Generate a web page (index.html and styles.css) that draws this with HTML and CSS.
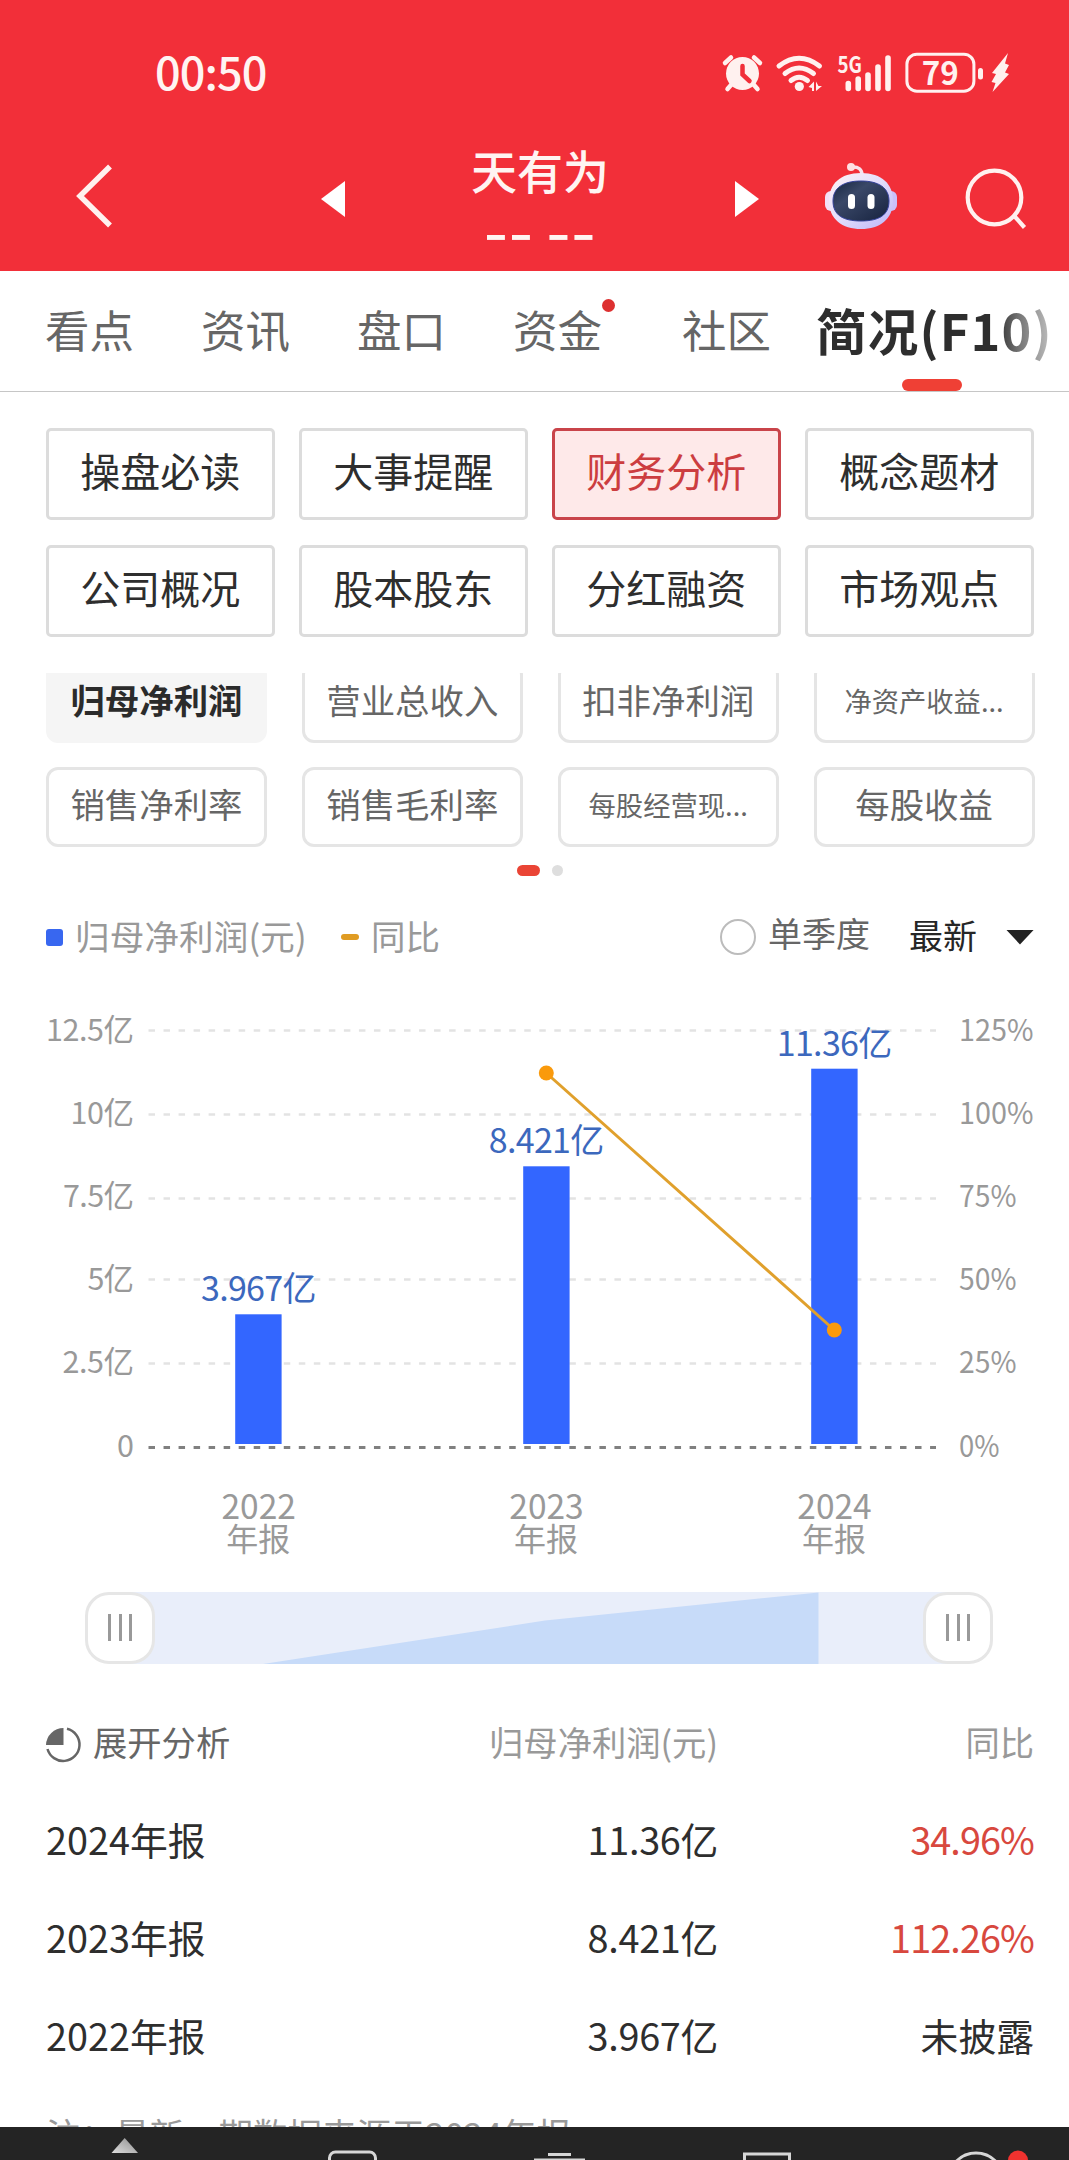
FILE: index.html
```html
<!DOCTYPE html>
<html lang="zh-CN">
<head>
<meta charset="utf-8">
<title>天有为 - 简况(F10)</title>
<link rel="stylesheet" href="styles.css">
</head>
<body>
<div class="screen">
  <header class="top">
    <div class="status">
      <span class="clock">00:50</span>
      <svg class="status-icons" width="290" height="44" viewBox="721 50 290 44" fill="#fff1ef">
        <circle cx="742.500" cy="73.500" r="16.500"/>
        <g fill="none" stroke="#fff1ef" stroke-linecap="round">
          <path d="M725 63l6-5.500M760 63l-6-5.500M731 85l-3.500 4M754 85l3.500 4" stroke-width="4.500"/>
          <path d="M742.500 66v8.500l7 6.500" stroke="#f12f39" stroke-width="4.500"/>
          <path d="M779 66Q799 50.500 819.500 66M785 73.500Q799 62.500 813.500 73.500M791 80.500Q799 74 807.500 80.500" stroke-width="5"/>
          <path d="M848.300 83.500v5M858.200 79v9.500M868 75v13.500M878 67v21.500M888 58v30.500" stroke-width="5.600"/>
          <rect x="906.900" y="54.200" width="67" height="37" rx="10" stroke-width="3"/>
          <path d="M980.500 70.500v6.500" stroke-width="5"/>
        </g>
        <circle cx="799.300" cy="86.500" r="4.600"/>
        <path d="M814 81.500v9.500h-2v-3l-3.500-1zM816 81.500v9.500l6-5h-3.500z"/>
        <path d="M1008 53l-16 20 4 1-4.500 8 4 1-3 9 16.500-18-4-1.500 4-7.500-4-1.500z"/>
        <text class="net" x="837.500" y="73" textLength="24.500" lengthAdjust="spacingAndGlyphs">5G</text>
        <text class="batt" x="940.300" y="85" text-anchor="middle" textLength="37" lengthAdjust="spacingAndGlyphs">79</text>
      </svg>
    </div>
    <nav class="bar">
      <svg class="back" width="40" height="68" viewBox="0 0 40 68"><path d="M35 4.500L5 34l30 29.500" fill="none" stroke="#fff1ef" stroke-width="5.500"/></svg>
      <svg class="prev" width="24" height="36" viewBox="0 0 24 36"><path d="M24 0v36L0 18z" fill="#fff"/></svg>
      <div class="stock">
        <h1>天有为</h1>
        <div class="quote">-- --</div>
      </div>
      <svg class="next" width="24" height="36" viewBox="0 0 24 36"><path d="M0 0v36l24-18z" fill="#fff"/></svg>
      <svg class="robot" width="74" height="68" viewBox="824 162 74 68">
        <defs>
          <linearGradient id="shell" x1="0" y1="0" x2="1" y2="1"><stop offset="0" stop-color="#fff3f5"/><stop offset=".5" stop-color="#e2ddfc"/><stop offset="1" stop-color="#bbb4f7"/></linearGradient>
          <linearGradient id="visor" x1="0" y1="0" x2="1" y2="1"><stop offset="0" stop-color="#172640"/><stop offset=".35" stop-color="#3a4868"/><stop offset="1" stop-color="#16223e"/></linearGradient>
        </defs>
        <path d="M862 175q0-8.500-10-8" fill="none" stroke="#f8e2ec" stroke-width="3.500"/>
        <circle cx="851" cy="167" r="4" fill="#ffdfe2"/>
        <rect x="825" y="191" width="12" height="20" rx="6" fill="#f3dff7"/>
        <rect x="885" y="191" width="12" height="20" rx="6" fill="#cbc0fa"/>
        <path d="M861 173c21 0 32 11 32 28 0 18-13 28-32 28s-32-10-32-28c0-17 11-28 32-28z" fill="url(#shell)"/>
        <path d="M861 181c18 0 28 7 28 20 0 14-10 20-28 20s-28-6-28-20c0-13 10-20 28-20z" fill="url(#visor)" stroke="#34429b" stroke-width="1"/>
        <rect x="848" y="194" width="7" height="15" rx="3.500" fill="#fff"/>
        <rect x="867.500" y="194" width="7" height="15" rx="3.500" fill="#fff"/>
      </svg>
      <svg class="search" width="62" height="62" viewBox="965 168 62 62" fill="none" stroke="#fff1ef" stroke-width="4.200"><circle cx="994.500" cy="197.500" r="26.800"/><path d="M1013 214.500l11.500 13"/></svg>
    </nav>
  </header>

  <nav class="tabs">
    <a>看点</a><a>资讯</a><a>盘口</a><a class="has-dot">资金</a><a>社区</a><a class="on">简况(F10)</a>
  </nav>

  <section class="sections">
    <a>操盘必读</a><a>大事提醒</a><a class="on">财务分析</a><a>概念题材</a>
    <a>公司概况</a><a>股本股东</a><a>分红融资</a><a>市场观点</a>
  </section>

  <section class="metrics">
    <div class="metric-grid">
      <a class="on">归母净利润</a><a>营业总收入</a><a>扣非净利润</a><a class="small">净资产收益...</a>
      <a>销售净利率</a><a>销售毛利率</a><a class="small">每股经营现...</a><a>每股收益</a>
    </div>
  </section>
  <div class="pager"><i class="on"></i><i></i></div>

  <div class="legend">
    <i class="sq"></i><span class="name">归母净利润(元)</span>
    <i class="dash"></i><span>同比</span>
    <i class="radio"></i><span class="quarter">单季度</span>
    <span class="latest">最新</span><i class="caret"></i>
  </div>

  <svg class="chart" width="1069" height="612" viewBox="0 980 1069 612">
    <g class="grid">
      <path d="M148.500 1030.500H936M148.500 1114.500H936M148.500 1198.500H936M148.500 1279.500H936M148.500 1363.500H936"/>
      <path class="zero" d="M148.500 1447.500H936"/>
    </g>
    <g class="axis" text-anchor="end">
      <text x="134" y="1041.300" textLength="88">12.5亿</text>
      <text x="134" y="1123.900" textLength="63.500">10亿</text>
      <text x="134" y="1207" textLength="71">7.5亿</text>
      <text x="134" y="1290" textLength="46.500">5亿</text>
      <text x="134" y="1373" textLength="71.500">2.5亿</text>
      <text x="134" y="1456.700">0</text>
    </g>
    <g class="axis">
      <text x="959" y="1041.300" textLength="74.500" lengthAdjust="spacingAndGlyphs">125%</text>
      <text x="959" y="1123.900" textLength="74.500" lengthAdjust="spacingAndGlyphs">100%</text>
      <text x="959" y="1207" textLength="57.500" lengthAdjust="spacingAndGlyphs">75%</text>
      <text x="959" y="1290" textLength="57.500" lengthAdjust="spacingAndGlyphs">50%</text>
      <text x="959" y="1373" textLength="57.500" lengthAdjust="spacingAndGlyphs">25%</text>
      <text x="959" y="1456.700" textLength="40.500" lengthAdjust="spacingAndGlyphs">0%</text>
    </g>
    <g fill="#3366ff">
      <rect x="235.200" y="1314.300" width="46.400" height="129.700"/>
      <rect x="523.200" y="1166.300" width="46.400" height="277.700"/>
      <rect x="811.200" y="1068.700" width="46.400" height="375.300"/>
    </g>
    <path d="M546.300 1073L834.300 1330" stroke="#e0a02c" stroke-width="3"/>
    <circle cx="546.300" cy="1073" r="7.500" fill="#fa9a0c"/>
    <circle cx="834.300" cy="1330" r="7.500" fill="#fa9a0c"/>
    <g class="value" text-anchor="middle">
      <text x="258.700" y="1300.500" textLength="115.500">3.967亿</text>
      <text x="546.500" y="1152.500" textLength="115.500">8.421亿</text>
      <text x="834.500" y="1055.500" textLength="115.500">11.36亿</text>
    </g>
    <g class="period" text-anchor="middle">
      <text x="258.700" y="1519">2022</text><text class="kind" x="258.300" y="1551">年报</text>
      <text x="546.500" y="1519">2023</text><text class="kind" x="546.100" y="1551">年报</text>
      <text x="834.500" y="1519">2024</text><text class="kind" x="834.100" y="1551">年报</text>
    </g>
  </svg>

  <div class="range">
    <div class="handle"><i></i><i></i><i></i></div>
    <svg class="track" width="838" height="72" viewBox="120 1592 838 72"><path d="M263 1664L545 1620.500 818.500 1592.500V1664z" fill="#c7dbf9"/></svg>
    <div class="handle"><i></i><i></i><i></i></div>
  </div>

  <section class="table">
    <div class="row head">
      <span class="expand"><svg width="36" height="36" viewBox="0 0 36 36"><path d="M17.500 1v17H0A17.500 17.500 0 0 1 17.500 1z" fill="#666"/><path d="M21 1.800A16.300 16.300 0 1 1 1.500 22" fill="none" stroke="#666" stroke-width="2.500"/></svg>展开分析</span>
      <span>归母净利润(元)</span><span>同比</span>
    </div>
    <div class="row"><span>2024年报</span><span class="amount">11.36亿</span><span class="up">34.96%</span></div>
    <div class="row"><span>2023年报</span><span class="amount">8.421亿</span><span class="up">112.26%</span></div>
    <div class="row"><span>2022年报</span><span class="amount">3.967亿</span><span>未披露</span></div>
  </section>

  <p class="note">注：最新一期数据来源于2024年报</p>

  <footer class="dock">
    <svg width="1069" height="33" viewBox="0 2127 1069 33" fill="none" stroke="#d6d6d6" stroke-width="3">
      <defs><linearGradient id="tri" x1="0" y1="1" x2="1" y2="0"><stop offset="0" stop-color="#dedede"/><stop offset="1" stop-color="#8c8c8c"/></linearGradient></defs>
      <path d="M124.700 2138L138 2153h-26.500z" fill="url(#tri)" stroke="none"/>
      <rect x="329.500" y="2152" width="46" height="40" rx="6"/>
      <path d="M548 2154.500h23M534 2160h51"/>
      <path d="M744.500 2170v-16h45v16"/>
      <circle cx="976" cy="2180.500" r="27.500"/>
      <circle cx="1018" cy="2160.500" r="10" fill="#f0322f" stroke="none"/>
    </svg>
  </footer>
</div>
</body>
</html>
```
FILE: styles.css
```css
* { box-sizing: border-box; }

body {
  margin: 0;
  background: #fff;
  font-family: "Noto Sans CJK SC", sans-serif;
  color: #2e2e2e;
}

.screen {
  width: 1069px;
  height: 2160px;
  overflow: hidden;
  display: flex;
  flex-direction: column;
}

.screen > * { flex-shrink: 0; }
svg { display: block; flex-shrink: 0; }
i { display: block; flex-shrink: 0; }

/* header */
.top { height: 271px; background: #f22f39; color: #fff4f2; }

.status {
  height: 144px;
  padding: 50px 58px 0 155px;
  display: flex;
  align-items: flex-start;
  justify-content: space-between;
}
.status-icons { overflow: visible; }
.clock { font-size: 45px; line-height: 42px; font-weight: 500; letter-spacing: -0.9px; }
.net { font-size: 23px; font-weight: 700; }
.batt { font-size: 32px; font-weight: 700; }

.bar { display: flex; align-items: flex-start; height: 127px; }
.back { margin: 18px 0 0 75px; }
.prev { margin: 37px 0 0 206px; }
.stock { width: 390px; text-align: center; }
.stock h1 { margin: 0; font-size: 46px; line-height: 50px; font-weight: 500; }
.quote { font-size: 70px; line-height: 50px; letter-spacing: 0.7px; word-spacing: -4px; margin-top: 8px; }
.next { margin-top: 37px; }
.robot { margin: 18px 0 0 65px; }
.search { margin: 24px 0 0 67px; }

/* tabs */
.tabs {
  height: 121px;
  border-bottom: 1px solid #c6c6c6;
  padding-left: 45px;
  display: flex;
  font-size: 44.500px;
  line-height: 116px;
  color: #666;
}
.tabs a { position: relative; margin-right: 67px; white-space: nowrap; }
.tabs .has-dot { margin-right: 80px; }
.tabs .has-dot::after {
  content: "";
  position: absolute;
  top: 28px;
  right: -13px;
  width: 13px;
  height: 13px;
  border-radius: 50%;
  background: #dd3030;
}
.tabs .on {
  margin: 0 0 0 -22px;
  font-size: 50.500px;
  letter-spacing: 1.200px;
  font-weight: 700;
  background: linear-gradient(90deg, #2e2e2e 76%, #777 86%, #c4c4c4 100%);
  background-clip: text;
  -webkit-background-clip: text;
  color: transparent;
}
.tabs .on::after {
  content: "";
  position: absolute;
  left: 86px;
  top: 108px;
  width: 60px;
  height: 12px;
  border-radius: 6px;
  background: #ef4035;
}

/* section buttons */
.sections {
  margin: 36px 35.500px 0 46px;
  display: grid;
  grid-template-columns: repeat(4, 1fr);
  grid-auto-rows: 92px;
  gap: 24.500px;
}
.sections a {
  border: 3px solid #dcdcdc;
  border-radius: 5px;
  font-size: 40px;
  line-height: 78px;
  text-align: center;
}
.sections .on { border-color: #c9444a; background: #fee9e9; color: #cc3d40; }

/* metrics */
.metrics { margin: 36px 34.500px 0 46px; height: 175px; overflow: hidden; }
.metric-grid {
  margin-top: -10px;
  display: grid;
  grid-template-columns: repeat(4, 1fr);
  grid-auto-rows: 80px;
  gap: 24px 35px;
}
.metric-grid a {
  border: 3px solid #e5e5e5;
  border-radius: 12px;
  font-size: 34.400px;
  line-height: 67px;
  text-align: center;
  color: #666;
  white-space: nowrap;
}
.metric-grid .on { background: #f5f5f5; border-color: #f5f5f5; color: #2b2b2b; font-weight: 600; }
.metric-grid .small { font-size: 27.300px; line-height: 69px; }

.pager { display: flex; gap: 12px; margin: 17px 0 0 517px; }
.pager i { width: 11px; height: 11px; border-radius: 6px; background: #dedede; }
.pager .on { width: 23px; background: #ea4435; }

/* legend */
.legend {
  height: 104px;
  padding: 0 35px 0 46px;
  display: flex;
  align-items: center;
  font-size: 34.500px;
  line-height: 40px;
  color: #999;
}
.legend span { margin-top: 14px; }
.legend i { margin-top: 19px; }
.sq { width: 17px; height: 17px; border-radius: 3px; background: #3867f0; }
.legend .name { margin-left: 12px; letter-spacing: 0.200px; }
.dash { width: 18px; height: 6px; border-radius: 3px; background: #e09c22; margin-left: 34px; }
.dash + span { margin-left: 12px; }
.radio { width: 36px; height: 36px; border: 2px solid #bcbcbc; border-radius: 50%; margin-left: auto; }
.legend .quarter { margin: 11px 39px 0 12px; color: #666; font-size: 34px; }
.legend .latest { color: #262626; font-size: 34px; }
.caret { width: 28px; height: 15px; background: #222; clip-path: polygon(0 0, 100% 0, 50% 100%); margin-left: 29px; }

/* chart */
.grid path { stroke: #e3e3e3; stroke-width: 2.500; stroke-dasharray: 6.500 8.530; fill: none; }
.grid .zero { stroke: #808080; stroke-width: 3; }
.axis { font-size: 30.500px; fill: #999; }
.value { font-size: 34px; fill: #3c68bd; }
.period { font-size: 33.500px; fill: #999; }
.period .kind { font-size: 32px; }

/* range slider */
.range { height: 72px; padding: 0 76px 0 85px; display: flex; }
.track { background: #e9eefa; margin: 0 -35px; }
.handle {
  position: relative;
  flex-shrink: 0;
  width: 70px;
  height: 72px;
  border: 3px solid #e6e6e6;
  border-radius: 24px;
  background: #fff;
  display: flex;
  align-items: center;
  justify-content: center;
  gap: 7.500px;
}
.handle i { width: 3px; height: 27px; background: #999; }

/* table */
.table { padding: 30px 35px 0 46px; }
.row {
  display: grid;
  grid-template-columns: 300px 372px 1fr;
  height: 98px;
  line-height: 90px;
  font-size: 37.800px;
}
.row span { text-align: right; }
.row span:first-child { text-align: left; }
.row.head { height: 100px; font-size: 34.300px; color: #999; line-height: 95px; }
.expand { display: flex; align-items: center; gap: 11px; color: #666; }
.row.head .expand { line-height: 40px; height: 94px; }
.expand svg { margin-top: 8px; }
.row .amount { letter-spacing: -0.300px; }
.row .up { color: #d8483e; letter-spacing: -0.9px; }

.note {
  margin: 17px 0 0 46px;
  height: 22px;
  overflow: hidden;
  font-size: 34.500px;
  line-height: 56px;
  color: #999;
  white-space: nowrap;
}

.dock { height: 33px; background: #242424; }
```
